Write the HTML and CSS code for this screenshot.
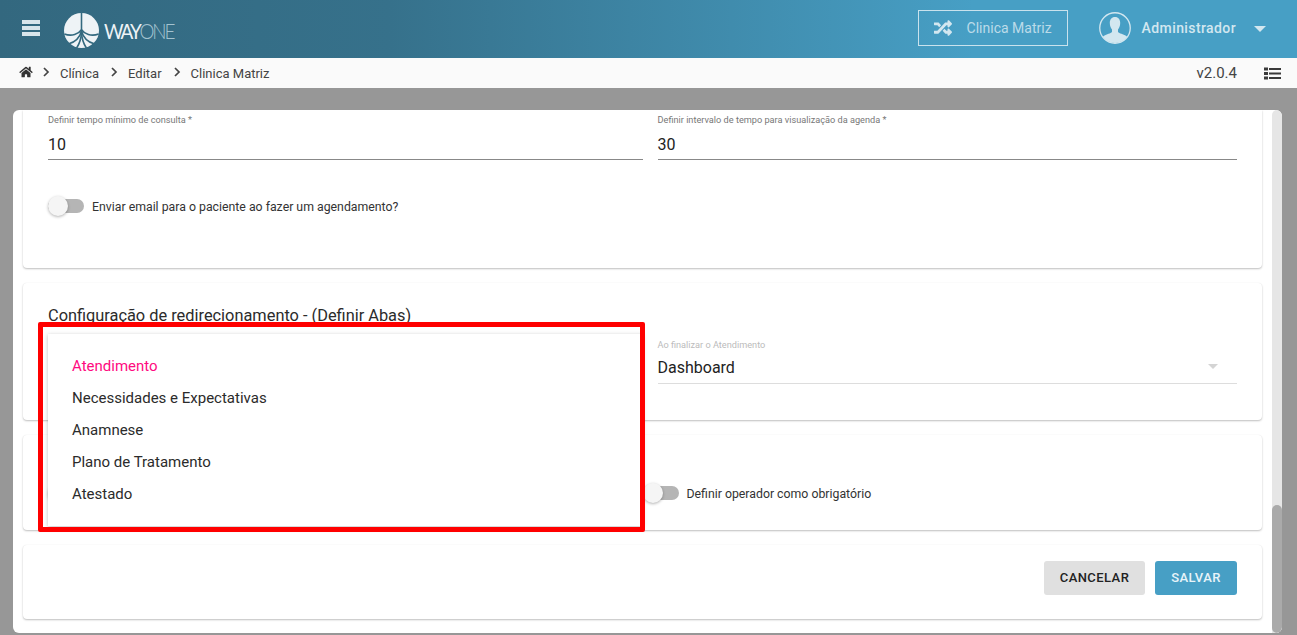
FILE: index.html
```html
<!DOCTYPE html>
<html lang="pt-BR">
<head>
<meta charset="utf-8">
<title>Clínica Matriz</title>
<link rel="stylesheet" href="styles.css">
</head>
<body>
<header class="topbar">
  <div class="burger"><span></span><span></span><span></span></div>
  <div class="logo">
    <svg class="logo-mark" viewBox="0 0 100 100" width="35" height="35">
      <circle cx="50" cy="50" r="50" fill="#eef3f6"/>
      <g fill="none" stroke="#33697f" stroke-width="4.500">
        <path d="M50 0V60"/>
        <path d="M50 48C42 60 22 68 1 60"/>
        <path d="M50 52C46 66 34 82 14 88"/>
        <path d="M50 56C49 72 44 88 36 100"/>
        <path d="M50 48C58 60 78 68 99 60"/>
        <path d="M50 52C54 66 66 82 86 88"/>
        <path d="M50 56C51 72 56 88 64 100"/>
      </g>
    </svg>
    <span class="logo-text"><span class="logo-way">WAY</span><span class="logo-one">ONE</span></span>
  </div>
  <div class="spacer"></div>
  <div class="unit-box">
    <svg class="shuffle" viewBox="0 0 512 512" width="18" height="18"><path fill="currentColor" d="M504.971 359.029c9.373 9.373 9.373 24.569 0 33.941l-80 79.984c-15.01 15.01-40.971 4.49-40.971-16.971V416h-58.785a12.004 12.004 0 0 1-8.773-3.812l-70.556-75.596 53.333-57.143L352 336h32v-39.981c0-21.438 25.943-31.998 40.971-16.971l80 79.981zM12 176h84l52.781 56.551 53.333-57.143-70.556-75.596A11.999 11.999 0 0 0 122.785 96H12c-6.627 0-12 5.373-12 12v56c0 6.627 5.373 12 12 12zm372 0v39.984c0 21.46 25.961 31.98 40.971 16.971l80-79.984c9.373-9.373 9.373-24.569 0-33.941l-80-79.981C409.943 24.021 384 34.582 384 56.019V96h-58.785a12.004 12.004 0 0 0-8.773 3.812L96 336H12c-6.627 0-12 5.373-12 12v56c0 6.627 5.373 12 12 12h110.785c3.326 0 6.503-1.381 8.773-3.812L352 176h32z"/></svg>
    <span>Clinica Matriz</span>
  </div>
  <svg class="avatar" viewBox="0 0 32 32" width="32" height="32">
    <defs><clipPath id="avatar-clip"><circle cx="16" cy="16" r="15"/></clipPath></defs>
    <g clip-path="url(#avatar-clip)"><path fill="#d2e7f0" d="M16 5c3.4 0 5.2 2.6 5.2 6 0 2.6-1 5-2.2 6.4v2.4c0 1 4 2.2 7 3.4 2 .8 2.6 2 2.6 3.8V33H3.400v-6c0-1.800.6-3 2.600-3.800 3-1.200 7-2.400 7-3.400v-2.400c-1.200-1.400-2.200-3.800-2.200-6.400 0-3.400 1.800-6 5.200-6z"/></g>
    <circle cx="16" cy="16" r="15.250" fill="none" stroke="#d2e7f0" stroke-width="1.300"/>
  </svg>
  <span class="user-name">Administrador</span>
  <span class="caret"></span>
</header>

<nav class="crumbs">
  <svg class="home" viewBox="0 0 576 512" width="14" height="12"><path fill="currentColor" d="M280.37 148.26L96 300.11V464a16 16 0 0 0 16 16l112.06-.29a16 16 0 0 0 15.92-16V368a16 16 0 0 1 16-16h64a16 16 0 0 1 16 16v95.64a16 16 0 0 0 16 16.05L464 480a16 16 0 0 0 16-16V300L295.67 148.26a12.19 12.19 0 0 0-15.3 0zM571.6 251.47L488 182.56V44.05a12 12 0 0 0-12-12h-56a12 12 0 0 0-12 12v72.61L318.47 43a48 48 0 0 0-61 0L4.34 251.47a12 12 0 0 0-1.6 16.9l25.5 31A12 12 0 0 0 45.15 301l235.22-193.74a12.19 12.19 0 0 1 15.3 0L530.9 301a12 12 0 0 0 16.9-1.6l25.5-31a12 12 0 0 0-1.7-16.93z"/></svg>
  <svg class="chev chev-first" viewBox="0 0 7 10" width="7" height="10"><path d="M1 1l4 4-4 4" fill="none" stroke="currentColor" stroke-width="1.700"/></svg>
  <span class="crumb">Clínica</span>
  <svg class="chev" viewBox="0 0 7 10" width="7" height="10"><path d="M1 1l4 4-4 4" fill="none" stroke="currentColor" stroke-width="1.700"/></svg>
  <span class="crumb">Editar</span>
  <svg class="chev" viewBox="0 0 7 10" width="7" height="10"><path d="M1 1l4 4-4 4" fill="none" stroke="currentColor" stroke-width="1.700"/></svg>
  <span class="crumb">Clinica Matriz</span>
  <div class="spacer"></div>
  <span class="version">v2.0.4</span>
  <svg class="list-icon" viewBox="0 0 17 13" width="17" height="13"><g fill="#3a3a3a"><rect x="0" y="0.500" width="4" height="3"/><rect x="0" y="5" width="4" height="3"/><rect x="0" y="9.500" width="4" height="3"/><rect x="5" y="1" width="12" height="2"/><rect x="5" y="5.500" width="12" height="2"/><rect x="5" y="10" width="12" height="2"/></g></svg>
</nav>

<main class="backdrop">
  <div class="panel">
    <div class="scroll-content">
      <section class="card card-first">
        <div class="two-cols">
          <div class="field">
            <label class="field-label">Definir tempo mínimo de consulta *</label>
            <div class="field-value">10</div>
          </div>
          <div class="field">
            <label class="field-label">Definir intervalo de tempo para visualização da agenda *</label>
            <div class="field-value">30</div>
          </div>
        </div>
        <div class="toggle-row toggle-row-first">
          <span class="toggle"><span class="thumb"></span></span>
          <span class="toggle-label">Enviar email para o paciente ao fazer um agendamento?</span>
        </div>
      </section>

      <section class="card card-redirect">
        <h2 class="card-title">Configuração de redirecionamento - (Definir Abas)</h2>
        <div class="two-cols">
          <div class="field field-select"></div>
          <div class="field field-select">
            <label class="field-label">Ao finalizar o Atendimento</label>
            <div class="field-value">Dashboard</div>
            <span class="select-arrow"></span>
          </div>
        </div>
      </section>

      <section class="card card-operator">
        <div class="two-cols">
          <div class="toggle-row">
            <span class="toggle"><span class="thumb"></span></span>
          </div>
          <div class="toggle-row toggle-row-right">
            <span class="toggle"><span class="thumb"></span></span>
            <span class="toggle-label">Definir operador como obrigatório</span>
          </div>
        </div>
      </section>

      <section class="card card-actions">
        <button class="btn btn-cancel" type="button">CANCELAR</button>
        <button class="btn btn-save" type="button">SALVAR</button>
      </section>
    </div>
    <div class="scrollbar"><div class="scroll-thumb"></div></div>
  </div>
</main>

<ul class="menu">
  <li class="menu-item menu-item-active">Atendimento</li>
  <li class="menu-item">Necessidades e Expectativas</li>
  <li class="menu-item">Anamnese</li>
  <li class="menu-item">Plano de Tratamento</li>
  <li class="menu-item">Atestado</li>
</ul>
<div class="highlight"></div>
</body>
</html>
```

FILE: styles.css
```css
* { box-sizing: border-box; }
html, body { height: 100%; }
body {
  margin: 0;
  height: 635px;
  overflow: hidden;
  display: flex;
  flex-direction: column;
  font-family: Roboto, "Liberation Sans", sans-serif;
  color: #222;
  background: #979797;
}
.spacer { flex: 1; }

/* top bar */
.topbar {
  height: 58px;
  flex: none;
  display: flex;
  align-items: center;
  padding-left: 22px;
  background: linear-gradient(90deg, #33687f 0%, #36718b 30%, #479fc5 75%, #479fc5 100%);
  color: #d2e7f0;
}
.burger {
  width: 18px;
  display: flex;
  flex-direction: column;
  gap: 2px;
  margin-bottom: 2px;
}
.burger span { height: 4px; background: #d8e5eb; }
.logo {
  display: flex;
  align-items: center;
  margin-left: 24px;
  margin-top: 3px;
}
.logo-mark { display: block; }
.logo-text {
  display: block;
  margin-left: 5px;
  width: 72px;
  font-family: Lato, Roboto, sans-serif;
  font-size: 21px;
  line-height: 24px;
  letter-spacing: -2.400px;
  white-space: nowrap;
  color: #eef3f6;
  transform: scaleX(.9);
  transform-origin: left center;
}
.logo-way { font-weight: 400; }
.logo-one { font-weight: 300; color: #a4c3d0; }
.unit-box {
  width: 150px;
  height: 36px;
  margin-top: -2px;
  display: flex;
  align-items: center;
  padding-left: 15px;
  gap: 15px;
  border: 1px solid #c9e2ed;
  font-size: 14px;
  color: #bcdbe9;
}
.shuffle { flex: none; color: #d2e7f0; }
.avatar { margin-left: 31px; margin-top: -2px; flex: none; }
.user-name {
  margin-left: 11px;
  margin-top: -2px;
  font-size: 14px;
  font-weight: 500;
  letter-spacing: .4px;
  color: #d2e7f0;
}
.caret {
  width: 0;
  height: 0;
  margin-left: 18px;
  margin-right: 31px;
  border-left: 6px solid transparent;
  border-right: 6px solid transparent;
  border-top: 6px solid #d2e7f0;
}

/* breadcrumb */
.crumbs {
  height: 30px;
  flex: none;
  display: flex;
  align-items: center;
  padding: 0 16px 0 19px;
  background: #fafafa;
  color: #444;
  font-size: 13px;
}
.home { margin-top: -3px; color: #333; }
.chev { margin-left: 12px; margin-top: -2px; color: #444; }
.chev-first { margin-left: 10px; }
.crumb { margin-left: 10px; }
.version { font-size: 15px; color: #444; margin-right: 27px; }
.list-icon { display: block; }

/* backdrop and panel */
.backdrop {
  flex: 1;
  min-height: 0;
  padding: 22px 15px 2px 13px;
  background: #979797;
}
.panel {
  height: 100%;
  display: flex;
  background: #fff;
  border-radius: 6px;
  overflow: hidden;
}
.scroll-content {
  flex: 1;
  min-width: 0;
  padding: 0 10px;
}
.scrollbar {
  width: 10px;
  flex: none;
  background: #e6e6e6;
  border-radius: 5px 5px 0 0;
  padding-top: 395px;
}
.scroll-thumb {
  height: 128px;
  background: #aaa;
  border-radius: 5px;
}

/* cards */
.card {
  background: #fff;
  border-radius: 4px;
  box-shadow: 0 1px 2px rgba(0, 0, 0, .25), 0 0 1px rgba(0, 0, 0, .06);
  padding: 0 25px;
  margin-bottom: 15px;
}
.card-first { height: 158px; padding-top: 4px; border-radius: 0 0 4px 4px; }
.card-redirect { height: 137px; padding-top: 23px; }
.card-operator { height: 95px; padding-top: 48px; }
.card-actions {
  height: 74px;
  padding-top: 16px;
  display: flex;
  justify-content: flex-end;
  gap: 10px;
}
.two-cols { display: grid; grid-template-columns: 1fr 1fr; }
.two-cols > :nth-child(2) { margin-left: 15px; }

.field { position: relative; height: 46px; border-bottom: 1px solid #888; }
.field-label {
  display: block;
  font-size: 9.190px;
  line-height: 11px;
  color: #777;
}
.field-value {
  margin-top: 10px;
  font-size: 16px;
  line-height: 20px;
  color: #222;
}
.field-select { height: 46px; border-bottom-color: #ddd; margin-top: 12px; padding-top: 1px; }
.field-select .field-label { color: #bbb; }
.field-select .field-value { margin-top: 8px; }
.select-arrow {
  position: absolute;
  right: 19px;
  top: 26px;
  width: 0;
  height: 0;
  border-left: 5px solid transparent;
  border-right: 5px solid transparent;
  border-top: 5px solid #d4d4d4;
}
.card-title {
  margin: 0;
  font-size: 16.380px;
  font-weight: 400;
  line-height: 20px;
  color: #2b2b2b;
}

/* toggles */
.toggle-row { display: flex; align-items: center; height: 20px; }
.toggle-row-first { margin-top: 36px; }
.toggle-row-right { margin-left: 0; }
.toggle {
  position: relative;
  flex: none;
  width: 36px;
  height: 14px;
  border-radius: 7px;
  background: #b5b5b5;
}
.thumb {
  position: absolute;
  left: 0;
  top: -3px;
  width: 20px;
  height: 20px;
  border-radius: 50%;
  background: #f5f5f5;
  box-shadow: 0 1px 3px rgba(0, 0, 0, .3);
}
.toggle-label { margin-left: 8px; padding-top: 1px; font-size: 12.300px; color: #333; }
.toggle-row-first .toggle-label { padding-top: 2px; }
.card-operator .two-cols > :nth-child(2) { margin-left: 0; padding-left: 0; }

/* buttons */
.btn {
  height: 34px;
  border: 0;
  border-radius: 3px;
  padding: 0 0 2px;
  font-family: Roboto, sans-serif;
  font-size: 13px;
  font-weight: 500;
  letter-spacing: .42px;
}
.btn-cancel { width: 101px; background: #e0e0e0; color: #222; }
.btn-save { width: 82px; background: #479fc5; color: #e8f4f9; }

/* open select menu and annotation */
.menu {
  position: absolute;
  left: 48px;
  top: 334px;
  width: 595px;
  height: 192px;
  margin: 0;
  padding: 16px 0;
  list-style: none;
  background: #fff;
  box-shadow: 0 1px 4px rgba(0, 0, 0, .25);
}
.menu-item {
  height: 32px;
  line-height: 32px;
  padding-left: 24px;
  font-size: 15px;
  color: #2b2b2b;
}
.menu-item-active { color: #ff0a80; }
.highlight {
  position: absolute;
  left: 38px;
  top: 322px;
  width: 607px;
  height: 210px;
  border: 5px solid #f00;
  border-radius: 2px;
}
```
